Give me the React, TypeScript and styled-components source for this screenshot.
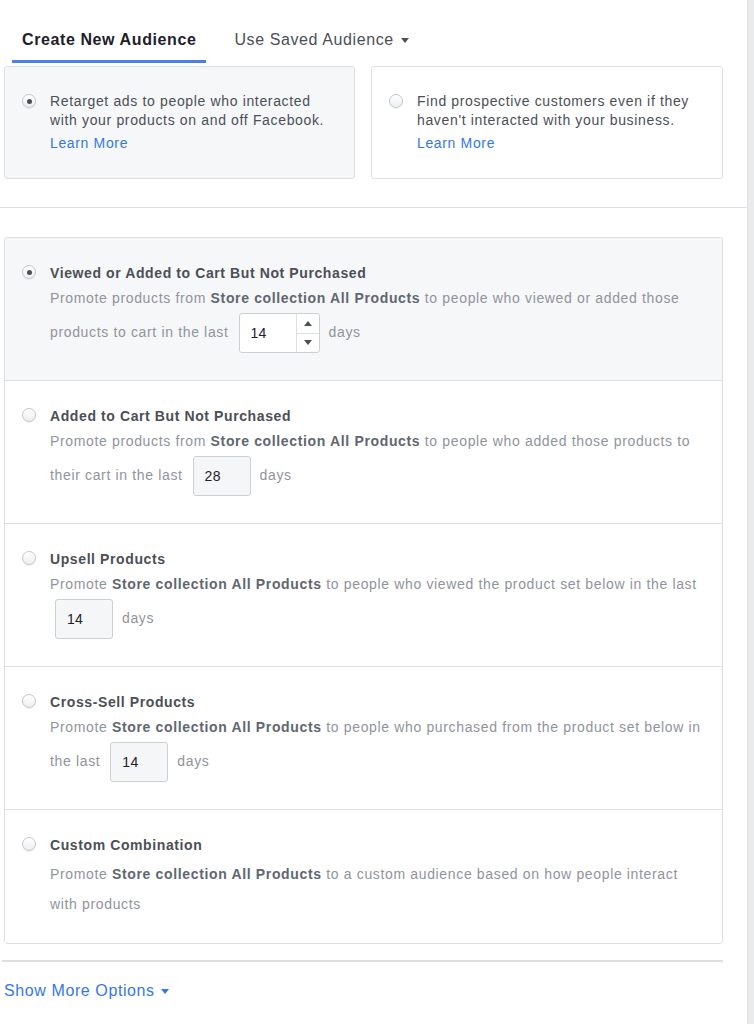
import * as React from "react";
import styled, { createGlobalStyle } from "styled-components";

const GlobalStyle = createGlobalStyle`
  body {
    margin: 0;
    background: #ffffff;
    font-family: "Liberation Sans", Helvetica, Arial, sans-serif;
  }
`;

const Page = styled.div`
  display: flex;
  width: 754px;
  min-height: 1024px;
`;

const Main = styled.div`
  width: 747px;
  background: #ffffff;
`;

const ScrollStrip = styled.div`
  width: 7px;
  background: #eaebed;
  border-left: 1px solid #e2e3e6;
  box-sizing: border-box;
`;

const Tabs = styled.div`
  display: flex;
  padding-left: 12px;
  height: 63px;
  align-items: flex-end;
`;

const Tab = styled.div<{ $active?: boolean }>`
  display: flex;
  align-items: center;
  gap: 7px;
  padding: 0 10px 10px;
  margin-right: 18px;
  font-size: 16px;
  letter-spacing: 0.6px;
  color: ${(p) => (p.$active ? "#1d2129" : "#4b4f56")};
  font-weight: ${(p) => (p.$active ? "bold" : "normal")};
  border-bottom: 3px solid ${(p) => (p.$active ? "#4a80e8" : "transparent")};
  line-height: 20px;
`;

const Caret = styled.span<{ $color?: string }>`
  display: inline-block;
  width: 0;
  height: 0;
  border-left: 4px solid transparent;
  border-right: 4px solid transparent;
  border-top: 5px solid ${(p) => p.$color || "#4b4f56"};
`;

const Cards = styled.div`
  display: grid;
  grid-template-columns: 351px 352px;
  gap: 16px;
  margin: 3px 0 0 4px;
`;

const Card = styled.div<{ $selected?: boolean }>`
  display: flex;
  gap: 14px;
  height: 113px;
  box-sizing: border-box;
  padding: 25px 17px 0;
  border: 1px solid #dddfe2;
  border-radius: 3px;
  background: ${(p) => (p.$selected ? "#f6f7f9" : "#ffffff")};
`;

const Radio = styled.span<{ $checked?: boolean }>`
  flex: none;
  position: relative;
  width: 14px;
  height: 14px;
  margin-top: 2px;
  border-radius: 50%;
  box-sizing: border-box;
  border: 1px solid #c4c7cc;
  background: linear-gradient(#ffffff, #eceef0);
  box-shadow: 0 1px 1px rgba(0, 0, 0, 0.06);

  &::after {
    content: "";
    display: ${(p) => (p.$checked ? "block" : "none")};
    position: absolute;
    left: 3.5px;
    top: 3.5px;
    width: 5px;
    height: 5px;
    border-radius: 50%;
    background: #4b4f56;
  }
`;

const CardText = styled.div`
  font-size: 14px;
  line-height: 19px;
  color: #4b4f56;
  letter-spacing: 0.65px;
`;

const Link = styled.a`
  display: block;
  margin-top: 4px;
  color: #3578e5;
  text-decoration: none;
  font-size: 14px;
  line-height: 19px;
`;

const Divider = styled.div`
  height: 1px;
  background: #dddfe2;
  margin-top: 28px;
`;

const OptionList = styled.div`
  margin: 29px 0 0 4px;
  width: 719px;
  box-sizing: border-box;
  border: 1px solid #dddfe2;
  border-radius: 3px;
  overflow: hidden;
`;

const Option = styled.div<{ $selected?: boolean }>`
  display: flex;
  gap: 14px;
  padding: 25px 17px 27px;
  box-sizing: border-box;
  background: ${(p) => (p.$selected ? "#f6f7f9" : "#ffffff")};
  border-top: 1px solid #dddfe2;

  &:first-child {
    border-top: none;
  }

  &:last-child {
    padding-bottom: 24px;
  }
`;

const OptionBody = styled.div`
  flex: 1;
`;

const OptionTitle = styled.div`
  font-size: 14px;
  line-height: 20px;
  font-weight: bold;
  color: #4b4f56;
  letter-spacing: 0.6px;
`;

const OptionDesc = styled.div<{ $gap?: number }>`
  margin-top: ${(p) => p.$gap || 0}px;
  font-size: 14px;
  line-height: 30px;
  color: #90949c;
  letter-spacing: 0.65px;

  b {
    color: #606770;
    font-weight: bold;
  }
`;

const NumberBox = styled.span<{ $width: number; $disabled?: boolean }>`
  display: inline-flex;
  vertical-align: middle;
  width: ${(p) => p.$width}px;
  height: 40px;
  margin: 0 9px 0 10px;
  box-sizing: border-box;
  border: 1px solid #ccd0d5;
  border-radius: 3px;
  background: ${(p) => (p.$disabled ? "#f5f6f7" : "#ffffff")};
  color: #1d2129;
  font-size: 14px;
  letter-spacing: 0.3px;
`;

const NumberValue = styled.span`
  flex: 1;
  display: flex;
  align-items: center;
  padding-left: 11px;
`;

const Spinner = styled.span`
  display: flex;
  flex-direction: column;
  width: 22px;
  border-left: 1px solid #dddfe2;
`;

const SpinButton = styled.span<{ $up?: boolean }>`
  flex: 1;
  display: flex;
  align-items: center;
  justify-content: center;
  border-top: ${(p) => (p.$up ? "none" : "1px solid #dddfe2")};

  &::before {
    content: "";
    width: 0;
    height: 0;
    border-left: 4px solid transparent;
    border-right: 4px solid transparent;
    ${(p) => (p.$up ? "border-bottom: 5px solid #4b4f56;" : "border-top: 5px solid #4b4f56;")}
  }
`;

const FooterRule = styled.div`
  margin: 16px 0 0 2px;
  width: 721px;
  height: 2px;
  background: #dddfe2;
`;

const MoreLink = styled.a`
  display: flex;
  align-items: center;
  gap: 6px;
  margin: 19px 0 0 4px;
  color: #3578e5;
  font-size: 16px;
  line-height: 20px;
  letter-spacing: 0.6px;
  text-decoration: none;
`;

type Num = { value: number; width: number; spinner?: boolean };

const Days = ({ n }: { n: Num }) => (
  <NumberBox $width={n.width} $disabled={!n.spinner}>
    <NumberValue>{n.value}</NumberValue>
    {n.spinner && (
      <Spinner>
        <SpinButton $up />
        <SpinButton />
      </Spinner>
    )}
  </NumberBox>
);

const S = <b>Store collection All Products</b>;

export default function App() {
  return (
    <Page>
      <GlobalStyle />
      <Main>
        <Tabs>
          <Tab $active>Create New Audience</Tab>
          <Tab>
            Use Saved Audience <Caret />
          </Tab>
        </Tabs>

        <Cards>
          <Card $selected>
            <Radio $checked />
            <CardText>
              Retarget ads to people who interacted
              <br />
              with your products on and off Facebook.
              <Link>Learn More</Link>
            </CardText>
          </Card>
          <Card>
            <Radio />
            <CardText>
              Find prospective customers even if they
              <br />
              haven't interacted with your business.
              <Link>Learn More</Link>
            </CardText>
          </Card>
        </Cards>

        <Divider />

        <OptionList>
          <Option $selected>
            <Radio $checked />
            <OptionBody>
              <OptionTitle>Viewed or Added to Cart But Not Purchased</OptionTitle>
              <OptionDesc>
                Promote products from {S} to people who viewed or added those
                <br />
                products to cart in the last
                <Days n={{ value: 14, width: 81, spinner: true }} />
                days
              </OptionDesc>
            </OptionBody>
          </Option>
          <Option>
            <Radio />
            <OptionBody>
              <OptionTitle>Added to Cart But Not Purchased</OptionTitle>
              <OptionDesc>
                Promote products from {S} to people who added those products to
                <br />
                their cart in the last
                <Days n={{ value: 28, width: 58 }} />
                days
              </OptionDesc>
            </OptionBody>
          </Option>
          <Option>
            <Radio />
            <OptionBody>
              <OptionTitle>Upsell Products</OptionTitle>
              <OptionDesc>
                Promote {S} to people who viewed the product set below in the last
                <br />
                <span style={{ marginLeft: -5 }} />
                <Days n={{ value: 14, width: 58 }} />
                days
              </OptionDesc>
            </OptionBody>
          </Option>
          <Option>
            <Radio />
            <OptionBody>
              <OptionTitle>Cross-Sell Products</OptionTitle>
              <OptionDesc>
                Promote {S} to people who purchased from the product set below in
                <br />
                the last
                <Days n={{ value: 14, width: 58 }} />
                days
              </OptionDesc>
            </OptionBody>
          </Option>
          <Option>
            <Radio />
            <OptionBody>
              <OptionTitle>Custom Combination</OptionTitle>
              <OptionDesc $gap={4}>
                Promote {S} to a custom audience based on how people interact
                <br />
                with products
              </OptionDesc>
            </OptionBody>
          </Option>
        </OptionList>

        <FooterRule />
        <MoreLink>
          Show More Options <Caret $color="#3578e5" />
        </MoreLink>
      </Main>
      <ScrollStrip />
    </Page>
  );
}
